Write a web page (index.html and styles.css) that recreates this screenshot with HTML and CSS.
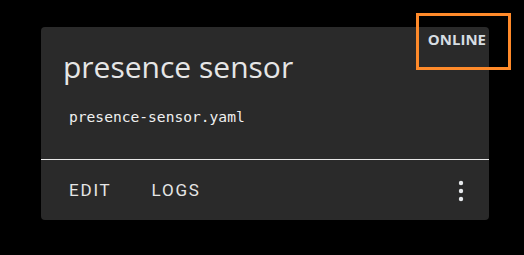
FILE: index.html
```html
<!DOCTYPE html>
<html>
<head>
<meta charset="utf-8">
<link rel="stylesheet" href="styles.css">
</head>
<body>
<div class="card">
  <div class="card-content">
    <div class="title">presence sensor</div>
    <div class="filename">presence-sensor.yaml</div>
    <div class="status">ONLINE</div>
  </div>
  <div class="card-actions">
    <span class="btn">EDIT</span>
    <span class="btn">LOGS</span>
    <span class="spacer"></span>
    <svg class="more" width="8" height="24" viewBox="0 0 8 24">
      <circle cx="4" cy="4" r="2.2" fill="#e6e9ec"/>
      <circle cx="4" cy="12" r="2.2" fill="#e6e9ec"/>
      <circle cx="4" cy="20" r="2.2" fill="#e6e9ec"/>
    </svg>
  </div>
</div>
<div class="highlight"></div>
</body>
</html>
```

FILE: styles.css
```css
html, body {
  margin: 0;
  padding: 0;
  background: #000;
  width: 524px;
  height: 255px;
  overflow: hidden;
}
body {
  padding: 27px 0 0 41px;
  box-sizing: border-box;
}
.card {
  position: relative;
  width: 448px;
  height: 193px;
  background: #2a2a2a;
  border-radius: 4px;
  display: flex;
  flex-direction: column;
}
.card-content {
  height: 133px;
  box-sizing: border-box;
  padding: 22px 0 0 22px;
  border-bottom: 1px solid #e8e8e8;
}
.title {
  font-family: "Open Sans", sans-serif;
  font-size: 30px;
  line-height: 36px;
  color: #e6e6e6;
}
.filename {
  margin-top: 22px;
  margin-left: 6px;
  font-family: "DejaVu Sans Mono", monospace;
  font-size: 14.6px;
  line-height: 20px;
  color: #f0f0f0;
}
.status {
  position: absolute;
  top: 2px;
  right: 3px;
  font-family: "Open Sans", sans-serif;
  font-weight: 700;
  font-size: 15px;
  line-height: 20px;
  color: #d6dde2;
}
.card-actions {
  flex: 1;
  display: flex;
  align-items: center;
  padding: 0 24px 0 28px;
}
.btn {
  font-family: Roboto, sans-serif;
  font-weight: 400;
  font-size: 17px;
  letter-spacing: 1.8px;
  color: #e6e6e6;
  margin-right: 40px;
}
.spacer { flex: 1; }
.more { display: block; margin-top: 2px; }
.highlight {
  position: absolute;
  left: 416px;
  top: 13px;
  width: 95px;
  height: 57px;
  box-sizing: border-box;
  border: 3px solid #ff8a2a;
}
```
